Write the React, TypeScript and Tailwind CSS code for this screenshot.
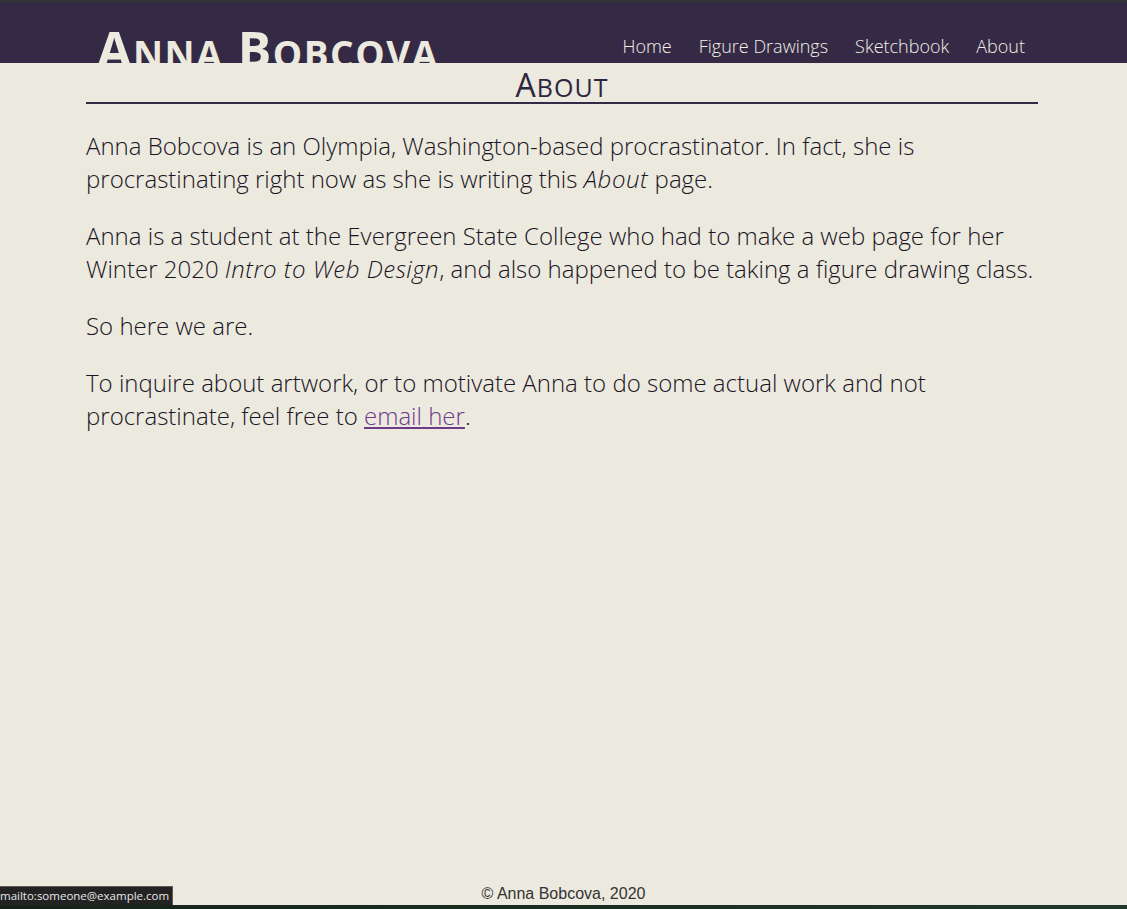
import React from "react";

export default function App() {
  const os = { fontFamily: '"Open Sans", "Noto Sans", sans-serif' };
  return (
    <div className="relative min-h-[909px] flex flex-col bg-[#ece9df]" style={os}>
      <div className="h-[2px] bg-[#333333]" />
      <header className="h-[61px] bg-[#352a45] overflow-hidden">
        <div className="w-[952px] ml-[86px] flex justify-between items-start">
          <div className="pl-[11px] mt-[10px] text-[50px] leading-normal font-bold text-[#ece9df] uppercase tracking-[1.5px] whitespace-nowrap">
            A<span className="text-[37px]">nna</span> B<span className="text-[37px]">obcova</span>
          </div>
          <nav className="mt-[31px] pr-[13px] flex gap-[27px] text-[18px] leading-normal font-light text-[#f3f0e8]">
            <a>Home</a>
            <a>Figure Drawings</a>
            <a>Sketchbook</a>
            <a>About</a>
          </nav>
        </div>
      </header>
      <main className="flex-1">
        <div className="w-[952px] ml-[86px] text-[#1a1524]">
          <h1 className="h-[39px] leading-[43px] text-[32px] font-medium tracking-[1px] text-center text-[#2e2540] uppercase border-b-2 border-[#352a45] box-content">
            A<span className="text-[25px]">bout</span>
          </h1>
          <div className="mt-[25px] text-[24px] leading-[33px] font-light">
            <p className="mb-[24px]">
              Anna Bobcova is an Olympia, Washington-based procrastinator. In fact, she is procrastinating right now as she is writing this <em className="tracking-[0.6px]">About</em> page.
            </p>
            <p className="mb-[24px]">
              Anna is a student at the Evergreen State College who had to make a web page for her Winter 2020 <em className="tracking-[0.5px]">Intro to Web Design</em>, and also happened to be taking a figure drawing class.
            </p>
            <p className="mb-[24px]">So here we are.</p>
            <p className="mb-[24px]">
              To inquire about artwork, or to motivate Anna to do some actual work and not procrastinate, feel free to{" "}
              <a className="text-[#6e3a8c] underline">email her</a>.
            </p>
          </div>
        </div>
      </main>
      <footer
        className="text-center text-[16px] leading-[18px] text-[#333333] pb-[2px]"
        style={{ fontFamily: '"Liberation Sans", Arial, sans-serif' }}
      >
        © Anna Bobcova, 2020
      </footer>
      <div className="h-[4px] bg-gradient-to-r from-[#15231a] to-[#21382a]" />
      <div className="absolute left-0 bottom-[4px] h-[19px] w-[173px] bg-[#232323] border border-[#5a5a5a] border-l-0 border-b-0 text-[11.5px] leading-[18px] text-[#e8e8e8] whitespace-nowrap overflow-hidden">
        mailto:someone@example.com
      </div>
    </div>
  );
}
